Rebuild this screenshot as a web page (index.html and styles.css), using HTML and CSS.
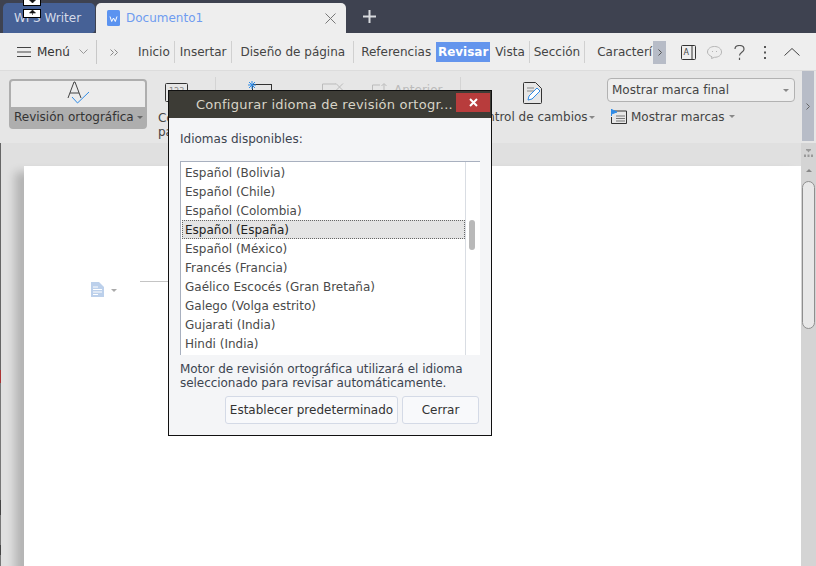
FILE: index.html
```html
<!DOCTYPE html>
<html lang="es">
<head>
    <meta charset="UTF-8">
    <title>Documento1 - WPS Writer</title>
    <link rel="stylesheet" href="styles.css">
</head>
<body>
    <div class="tabbar">
        <div class="tab-home">WPS Writer</div>
        <div class="tab-doc">
            <svg class="doc-logo" width="13" height="16" viewBox="0 0 13 16"><rect width="13" height="16" rx="1.5" fill="#5b93f0"/><path d="M3 6.500l1.700 5L6.500 8l1.800 3.500L10 6.500" fill="none" stroke="#fff" stroke-width="1"/></svg>
            <span class="doc-name">Documento1</span>
            <svg class="doc-close" width="11" height="11" viewBox="0 0 11 11"><path d="M.5.5l10 10M10.500.5l-10 10" stroke="#777" stroke-width="1"/></svg>
        </div>
        <svg class="tab-plus" width="13" height="13" viewBox="0 0 13 13"><path d="M6.500 0v13M0 6.500h13" stroke="#d8dade" stroke-width="2"/></svg>
    </div>

    <div class="menubar">
        <div class="menu-btn">
            <svg width="14" height="10" viewBox="0 0 14 10"><path d="M0 .5h14M0 5h14M0 9.500h14" stroke="#444" stroke-width="1"/></svg>
            <span>Menú</span>
            <svg width="9" height="6" viewBox="0 0 9 6"><path d="M.5.5l4 4 4-4" fill="none" stroke="#999"/></svg>
        </div>
        <svg class="more-left" width="8" height="7" viewBox="0 0 8 7"><path d="M.5.5l3 3-3 3M4.500.5l3 3-3 3" fill="none" stroke="#888"/></svg>
        <span class="mtab mtab-inicio">Inicio</span>
        <span class="mtab mtab-insertar">Insertar</span>
        <span class="mtab mtab-diseno">Diseño de página</span>
        <span class="mtab mtab-ref">Referencias</span>
        <span class="mtab active">Revisar</span>
        <span class="mtab mtab-vista">Vista</span>
        <span class="mtab mtab-seccion">Sección</span>
        <span class="mtab mtab-cut">Caracterí</span>
        <span class="mtab-next">
            <svg width="4" height="7" viewBox="0 0 4 7"><path d="M.5.5l3 3-3 3" fill="none" stroke="#555"/></svg>
        </span>
        <svg class="mi-read" width="15" height="15" viewBox="0 0 15 15"><rect x=".5" y=".5" width="14" height="14" rx="1" fill="none" stroke="#333"/><path d="M11 .5v14" stroke="#333"/><text x="2.500" y="10" class="icon-text">A</text></svg>
        <svg class="mi-chat" width="15" height="13" viewBox="0 0 15 13"><path d="M7.500.5c4 0 7 2.300 7 5.500s-3 5.300-7 5.300l-3 1.200.5-1.700C2.300 9.500.5 8 .5 6 .5 2.800 3.500.5 7.500.500z" fill="none" stroke="#b5b5b5"/><path d="M5 5.500h1M9 5.500h1" stroke="#b5b5b5"/></svg>
        <svg class="mi-help" width="11" height="15" viewBox="0 0 11 15"><path d="M1 4C1 1.800 3 .5 5.500 .5S10 2 10 4.200C10 7 5.500 7.500 5.500 10.500M5.500 12.800V15" fill="none" stroke="#555" stroke-width="1.200"/></svg>
        <svg class="mi-dots" width="2" height="13" viewBox="0 0 2 13"><path d="M0 0h2v2H0zM0 5.500h2v2H0zM0 11h2v2H0z" fill="#555"/></svg>
        <svg class="mi-up" width="16" height="8" viewBox="0 0 16 8"><path d="M.5 7.500L8 .5l7.500 7" fill="none" stroke="#444"/></svg>
    </div>

    <div class="ribbon">
        <div class="spell-btn">
            <div class="spell-top">
                <svg width="24" height="24" viewBox="0 0 24 24"><path d="M1 17L7 1h1l6 16M3 12h9" fill="none" stroke="#444"/><path d="M5 16l5.500 6L22 11" fill="none" stroke="#2f8be6" stroke-width="1"/></svg>
            </div>
            <div class="spell-label">Revisión ortográfica<i class="caret"></i></div>
        </div>
        <div class="rb-count">
            <svg width="23" height="19" viewBox="0 0 23 19"><rect x=".5" y=".5" width="22" height="18" rx="1" fill="none" stroke="#333"/><text x="4" y="11" class="icon-text">123</text></svg>
            <span>Contar<br>palabras</span>
        </div>
        <div class="rb-sep rb-sep-a"></div>
        <svg class="rb-comment" width="24" height="20" viewBox="0 0 24 20"><rect x="4.500" y="3.500" width="19" height="16" fill="none" stroke="#333"/><path d="M4 0v8M0 4h8M1 1l6 6M7 1L1 7" stroke="#2f8be6"/></svg>
        <svg class="rb-del" width="22" height="14" viewBox="0 0 22 14"><path d="M14 1H.5v13" fill="none" stroke="#bbb"/><path d="M14 .5l7 7M21 .5l-7 7" stroke="#bbb"/></svg>
        <svg class="rb-prev" width="16" height="14" viewBox="0 0 16 14"><path d="M8 2H.5v12" fill="none" stroke="#bbb"/><path d="M12 8V1M9.500 3L12 .5 14.500 3" fill="none" stroke="#bbb"/></svg>
        <span class="rb-prev-label">Anterior</span>
        <div class="rb-sep rb-sep-b"></div>
        <div class="rb-track">
            <svg width="19" height="22" viewBox="0 0 19 22"><path d="M.5 1.500a1 1 0 0 1 1-1h11l6 6v14a1 1 0 0 1-1 1h-16a1 1 0 0 1-1-1z" fill="none" stroke="#333"/><path d="M4 6h7M4 9h7" stroke="#888"/><path d="M5 18l1-4 8-8 3 3-8 8z" fill="#fff" stroke="#2f8be6"/></svg>
            <span>Control de cambios<i class="caret"></i></span>
        </div>
        <div class="rb-marks">
            <div class="mark-select">Mostrar marca final<i class="caret"></i></div>
            <div class="mark-show">
                <svg width="16" height="15" viewBox="0 0 16 15"><path d="M3 2h12.500v12.500H.5V8" fill="none" stroke="#333"/><path d="M.5 7V0M.5.500L6 3 .5 5z" fill="#2f8be6" stroke="#2f8be6"/><path d="M5 7h9M5 9.500h9M5 12h9" stroke="#777"/></svg>
                <span>Mostrar marcas</span>
                <i class="caret"></i>
            </div>
        </div>
        <div class="rb-next">
            <svg width="4" height="7" viewBox="0 0 4 7"><path d="M.5.5l3 3-3 3" fill="none" stroke="#666"/></svg>
        </div>
    </div>

    <div class="workspace">
        <div class="desk-edge"></div>
        <div class="desk">
            <div class="page">
                <svg width="13" height="15" viewBox="0 0 13 15"><path d="M0 0h8l5 5v10H0z" fill="#bcd0eb"/><path d="M2 5h5M2 7.500h9M2 10h9M2 12.500h5" stroke="#fff"/></svg>
                <i class="caret page-caret"></i>
                <div class="margin-line"></div>
            </div>
        </div>
        <div class="vscroll">
            <svg width="9" height="8" viewBox="0 0 9 8"><path d="M2 0h5v1.500H6L4.500 3.500 3 1.500H2zM0 5.500h2V8H0zM3.500 5.500h2V8h-2zM7 5.500h2V8H7z" fill="#999"/></svg>
            <i class="scroll-up"></i>
            <div class="vthumb"></div>
        </div>
    </div>

    <div class="cursor-mark">
        <div class="cursor-box"><svg width="7" height="5" viewBox="0 0 7 5"><path d="M3.500 0v2M.5 2h6l-3 3z" fill="#111" stroke="#111" stroke-width=".6"/></svg></div>
        <div class="cursor-box"><svg width="7" height="5" viewBox="0 0 7 5"><path d="M3.500 5V3M.5 3h6l-3-3z" fill="#111" stroke="#111" stroke-width=".6"/></svg></div>
    </div>

    <div class="dialog">
        <div class="dlg-title">
            <span class="dlg-caption">Configurar idioma de revisión ortogr...</span>
            <div class="dlg-close">
                <svg width="9" height="9" viewBox="0 0 9 9"><path d="M1 1l7 7M8 1L1 8" stroke="#fff" stroke-width="2"/></svg>
            </div>
        </div>
        <div class="dlg-body">
            <div class="dlg-label">Idiomas disponibles:</div>
            <div class="lang-box">
                <ul class="lang-list">
                    <li>Español (Bolivia)</li>
                    <li>Español (Chile)</li>
                    <li>Español (Colombia)</li>
                    <li class="selected">Español (España)</li>
                    <li>Español (México)</li>
                    <li>Francés (Francia)</li>
                    <li>Gaélico Escocés (Gran Bretaña)</li>
                    <li>Galego (Volga estrito)</li>
                    <li>Gujarati (India)</li>
                    <li>Hindi (India)</li>
                </ul>
                <div class="lang-scroll"><div class="lang-thumb"></div></div>
            </div>
            <p class="dlg-note">Motor de revisión ortográfica utilizará el idioma seleccionado para revisar automáticamente.</p>
            <div class="dlg-buttons">
                <button class="btn-default">Establecer predeterminado</button>
                <button class="btn-close">Cerrar</button>
            </div>
        </div>
    </div>
</body>
</html>
```

FILE: styles.css
```css
html, body {
    margin: 0;
    height: 100%;
    overflow: hidden;
}
body {
    font-family: "DejaVu Sans", sans-serif;
    font-size: 12px;
    color: #444;
    background: #e0e0e0;
    position: relative;
}
.icon-text {
    font-family: "DejaVu Sans", sans-serif;
    font-size: 8px;
    fill: #888;
}
.mi-read .icon-text {
    fill: #444;
}
.caret {
    display: inline-block;
    width: 0;
    height: 0;
    border-left: 3px solid transparent;
    border-right: 3px solid transparent;
    border-top: 3px solid #888;
    vertical-align: middle;
}

/* top tabs */
.tabbar {
    height: 33px;
    background: #3e4250;
    display: flex;
    align-items: flex-end;
    padding-left: 3px;
    box-sizing: border-box;
}
.tab-home {
    width: 92px;
    height: 30px;
    background: #466196;
    color: #d5dbe8;
    border-radius: 5px 5px 4px 0;
    line-height: 31px;
    text-align: center;
    box-sizing: border-box;
    padding-right: 3px;
}
.tab-doc {
    width: 250px;
    height: 30px;
    margin-left: 1px;
    background: #eeeeee;
    border-radius: 5px 5px 0 0;
    display: flex;
    align-items: center;
    padding-left: 11px;
    box-sizing: border-box;
}
.doc-logo {
    margin-right: 6px;
}
.doc-name {
    color: #6f9cf0;
    width: 199px;
}
.tab-plus {
    margin: 0 0 10px 17px;
}

/* menu row */
.menubar {
    height: 38px;
    background: #eeeeee;
    display: flex;
    align-items: center;
    border-bottom: 1px solid #dcdcdc;
    box-sizing: border-box;
    color: #444;
    padding-top: 1px;
}
.menu-btn {
    width: 79px;
    height: 24px;
    margin-left: 17px;
    display: flex;
    align-items: center;
    gap: 6px;
    border-right: 1px solid #c8c8c8;
    color: #333;
}
.menu-btn svg:last-child {
    margin-left: 3px;
}
.more-left {
    margin-left: 13px;
}
.mtab {
    height: 22px;
    line-height: 22px;
    box-sizing: border-box;
    white-space: nowrap;
}
.mtab-inicio {
    margin-left: 20px;
    padding-right: 4px;
    border-right: 1px solid #d0d0d0;
}
.mtab-insertar {
    padding: 0 5px;
    border-right: 1px solid #d0d0d0;
}
.mtab-diseno {
    padding: 0 8px;
    border-right: 1px solid #d0d0d0;
}
.mtab-ref {
    padding-left: 7px;
}
.mtab.active {
    background: #6495ed;
    color: #fff;
    font-weight: bold;
    margin-left: 5px;
    width: 54px;
    text-align: center;
    height: 20px;
    line-height: 20px;
}
.mtab-vista {
    margin-left: 5px;
    padding-right: 4px;
    border-right: 1px solid #d0d0d0;
}
.mtab-seccion {
    padding: 0 4px;
    border-right: 1px solid #d0d0d0;
}
.mtab-cut {
    width: 56px;
    overflow: hidden;
    margin-left: 12px;
}
.mtab-next {
    width: 13px;
    height: 23px;
    background: #b7bcc7;
    display: flex;
    align-items: center;
    justify-content: center;
}
.mi-read {
    margin-left: 15px;
}
.mi-chat {
    margin-left: 11px;
}
.mi-help {
    margin-left: 12px;
}
.mi-dots {
    margin-left: 19px;
}
.mi-up {
    margin-left: 18px;
}

/* ribbon */
.ribbon {
    height: 72px;
    background: #e6e6e6;
    display: flex;
    position: relative;
    box-sizing: border-box;
    padding-left: 9px;
}
.spell-btn {
    width: 138px;
    height: 50px;
    margin-top: 8px;
    border-radius: 4px;
    border: 2px solid #aeaeae;
    box-sizing: border-box;
    display: flex;
    flex-direction: column;
    background: #ececec;
}
.spell-top {
    height: 26px;
    display: flex;
    justify-content: center;
    box-sizing: border-box;
}
.spell-top svg {
    margin-left: 2px;
}
.spell-label {
    flex: 1;
    background: #aeaeae;
    color: #333;
    padding-left: 3px;
    line-height: 20px;
    white-space: nowrap;
}
.spell-label .caret {
    margin-left: 3px;
    border-top-color: #666;
}
.rb-count {
    width: 41px;
    margin-left: 18px;
    padding-top: 12px;
    line-height: 14px;
    white-space: nowrap;
}
.rb-count span {
    display: block;
    margin: 6px 0 0 -7px;
}
.rb-sep {
    width: 1px;
    height: 57px;
    margin-top: 6px;
    background: #d4d4d4;
}
.rb-sep-a {
    margin-left: 9px;
}
.rb-comment {
    margin: 10px 0 0 32px;
}
.rb-del {
    margin: 12px 0 0 50px;
}
.rb-prev {
    margin: 12px 0 0 28px;
}
.rb-prev-label {
    margin: 12px 0 0 6px;
    width: 66px;
    color: #bbb;
}
.rb-track {
    width: 130px;
    padding-top: 11px;
    text-align: center;
    white-space: nowrap;
    display: flex;
    flex-direction: column;
    align-items: center;
}
.rb-track span {
    margin: 6px 0 0 14px;
}
.rb-track svg {
    margin-left: 12px;
}
.rb-track .caret {
    margin-left: 1px;
}
.rb-marks {
    width: 188px;
    margin-left: 16px;
    padding-top: 7px;
}
.mark-select {
    height: 24px;
    line-height: 22px;
    border: 1px solid #b2b2b2;
    border-radius: 4px;
    background: #eeeeee;
    color: #444;
    padding: 0 5px 0 4px;
    box-sizing: border-box;
    display: flex;
    justify-content: space-between;
    align-items: center;
}
.mark-show {
    display: flex;
    align-items: center;
    margin: 7px 0 0 4px;
    gap: 4px;
}
.rb-next {
    position: absolute;
    right: 2px;
    top: 0;
    width: 12px;
    height: 70px;
    background: #b7bcc7;
    display: flex;
    align-items: center;
    justify-content: center;
}

/* document area */
.workspace {
    height: 423px;
    display: flex;
}
.desk-edge {
    width: 1px;
    background: linear-gradient(#666 0 227px, #a33 227px 240px, #777 240px 357px, #444 357px 372px, #777 372px 402px, #444 402px 412px, #777 412px);
}
.desk {
    flex: 1;
    padding: 23px 0 0 23px;
    background: #e0e0e0;
    overflow: hidden;
}
.page {
    height: 500px;
    background: #fff;
    box-shadow: -9px 6px 9px rgba(0, 0, 0, 0.2);
    display: flex;
    align-items: flex-start;
    padding: 116px 0 0 67px;
    box-sizing: border-box;
}
.page-caret {
    margin: 7px 0 0 7px;
    border-top-color: #aaa;
}
.margin-line {
    width: 30px;
    height: 1px;
    background: #c4c4c4;
    margin: -1px 0 0 23px;
}
.vscroll {
    width: 15px;
    background: #d4d4d4;
    display: flex;
    flex-direction: column;
    align-items: center;
    padding-top: 6px;
    box-sizing: border-box;
}
.scroll-up {
    width: 0;
    height: 0;
    margin-top: 12px;
    border-left: 3px solid transparent;
    border-right: 3px solid transparent;
    border-bottom: 3px solid #888;
}
.vthumb {
    width: 13px;
    height: 148px;
    margin-top: 9px;
    background: #e8e8e8;
    border: 1px solid #8f8f8f;
    border-radius: 7px;
    box-sizing: border-box;
}

/* resize cursor caught in the shot */
.cursor-mark {
    position: absolute;
    left: 23px;
    top: -3px;
    display: flex;
    flex-direction: column;
    gap: 3px;
}
.cursor-box {
    width: 16px;
    height: 7px;
    background: #fff;
    border: 1px solid #000;
    display: flex;
    justify-content: center;
}

/* dialog */
.dialog {
    position: absolute;
    left: 168px;
    top: 90px;
    width: 324px;
    height: 346px;
    border: 1px solid #111;
    box-sizing: border-box;
    background: #f4f5f7;
}
.dlg-title {
    height: 27px;
    background: #3d3c36;
    display: flex;
    align-items: center;
    color: #d8d4c8;
    padding-left: 27px;
    font-size: 13px;
    letter-spacing: 0.24px;
    box-sizing: border-box;
}
.dlg-caption {
    flex: 1;
    white-space: nowrap;
}
.dlg-close {
    width: 34px;
    height: 19px;
    margin: -5px 1px 0 0;
    background: #b83c3c;
    display: flex;
    align-items: center;
    justify-content: center;
}
.dlg-body {
    padding: 0 11px;
}
.dlg-label {
    margin-top: 14px;
    line-height: 14px;
    color: #3c4450;
}
.lang-box {
    margin-top: 15px;
    height: 194px;
    border-top: 1px solid #a8b0bf;
    border-left: 1px solid #a8b0bf;
    display: flex;
    background: #fff;
    box-sizing: border-box;
}
.lang-list {
    list-style: none;
    margin: 0;
    padding: 1px 0 0 1px;
    width: 285px;
    border-right: 1px solid #d9dde3;
    box-sizing: border-box;
}
.lang-list li {
    height: 19px;
    line-height: 19px;
    padding: 1px 0 0 3px;
    color: #4a4a4a;
    white-space: nowrap;
    box-sizing: border-box;
}
.lang-list li.selected {
    background: #e4e4e4;
    outline: 1px dotted #666;
    outline-offset: -1px;
    color: #222;
}
.lang-scroll {
    flex: 1;
    padding: 58px 0 0 3px;
}
.lang-thumb {
    width: 6px;
    height: 30px;
    background: #b9b9b9;
    border-radius: 3px;
}
.dlg-note {
    margin: 7px 0 0;
    line-height: 14px;
    color: #3c4450;
    letter-spacing: -0.05px;
}
.dlg-buttons {
    display: flex;
    justify-content: flex-end;
    gap: 4px;
    margin-top: 6px;
    padding-right: 1px;
}
.dlg-buttons button {
    height: 28px;
    font-family: "DejaVu Sans", sans-serif;
    font-size: 12px;
    color: #333;
    background: #f8f9fb;
    border: 1px solid #d4dae6;
    border-radius: 3px;
    padding: 0;
}
.btn-default {
    width: 173px;
}
.btn-close {
    width: 77px;
}
```
